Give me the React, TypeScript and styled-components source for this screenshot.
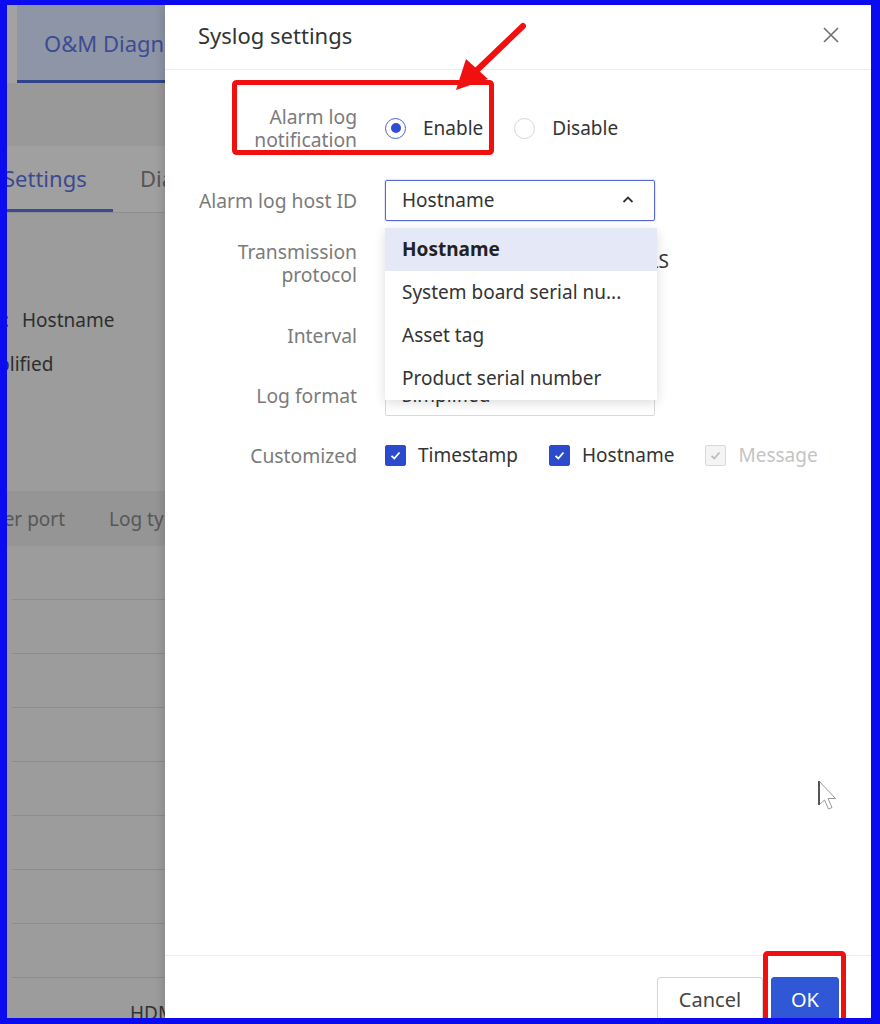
import styled, { createGlobalStyle } from "styled-components";

const GlobalStyle = createGlobalStyle`
  html, body {
    margin: 0;
    padding: 0;
    background: #fff;
  }
  body {
    font-family: "Noto Sans", "Open Sans", sans-serif;
  }
  * {
    box-sizing: border-box;
  }
`;

const Frame = styled.div`
  position: relative;
  display: flex;
  width: 880px;
  height: 1024px;
  border-style: solid;
  border-color: #0b0bf0;
  border-width: 5px 9px 6px 7px;
  overflow: hidden;
`;

/* dimmed page behind the dialog */
const BgPanel = styled.div`
  width: 158px;
  flex-shrink: 0;
  background: #9c9c9c;
  overflow: hidden;
  font-size: 19px;
  white-space: nowrap;
`;

const TopNav = styled.div`
  display: flex;
  height: 78px;
  padding-left: 10px;
  background: #a2a2a2;
`;

const NavTab = styled.div`
  flex: 1;
  display: flex;
  align-items: center;
  padding-left: 27px;
  background: #8e95a6;
  border-bottom: 3px solid #31428c;
  color: #3c4c92;
  font-size: 22px;
`;

const NavGap = styled.div`
  height: 63px;
  background: #999;
`;

const SubTabs = styled.div`
  display: flex;
  align-items: stretch;
  gap: 27px;
  height: 67px;
  background: #a0a0a0;
  border-bottom: 1px solid #8e8e8e;
`;

const SubTab = styled.div<{ $active?: boolean }>`
  display: flex;
  align-items: center;
  flex-shrink: 0;
  padding-left: ${(p) => (p.$active ? "13px" : "0")};
  margin-left: ${(p) => (p.$active ? "-17px" : "0")};
  width: ${(p) => (p.$active ? "123px" : "auto")};
  font-size: 22px;
  color: ${(p) => (p.$active ? "#3b4a8f" : "#555")};
  border-bottom: 3px solid ${(p) => (p.$active ? "#3a4a90" : "transparent")};
`;

const InfoArea = styled.div`
  height: 278px;
  padding-top: 85px;
`;

const InfoLine = styled.div<{ $shift: number }>`
  display: flex;
  align-items: center;
  height: 44px;
  margin-left: ${(p) => p.$shift}px;
  color: #2e2e2e;
`;

const InfoKey = styled.span`
  width: 32px;
  margin-right: 13px;
  text-align: right;
`;

const TableHead = styled.div`
  display: flex;
  align-items: center;
  height: 55px;
  background: #959595;
  color: #575757;
`;

const HeadCell = styled.span<{ $w?: number; $shift?: number }>`
  width: ${(p) => (p.$w ? `${p.$w}px` : "auto")};
  margin-left: ${(p) => p.$shift ?? 0}px;
  flex-shrink: 0;
`;

const TableRow = styled.div`
  height: 54px;
  margin-left: 5px;
  border-bottom: 1px solid #8c8c8c;
`;

const TableFoot = styled.div`
  padding: 22px 0 0 123px;
  color: #333;
`;

/* dialog */
const Dialog = styled.div`
  flex: 1;
  display: flex;
  flex-direction: column;
  background: #fff;
  box-shadow: -3px 0 8px rgba(0, 0, 0, 0.12);
  color: #333;
`;

const Header = styled.div`
  display: flex;
  align-items: center;
  justify-content: space-between;
  height: 65px;
  padding: 0 31px 5px 33px;
  border-bottom: 1px solid #ececec;
  flex-shrink: 0;
`;

const Title = styled.h1`
  margin: 0;
  font-size: 22px;
  font-weight: 400;
  color: #333;
`;

const CloseBtn = styled.button`
  display: flex;
  padding: 0;
  border: none;
  background: none;
`;

const Body = styled.div`
  flex: 1;
  padding-top: 22px;
`;

const Row = styled.div<{ $h: number; $track?: number; $pt?: number }>`
  display: grid;
  grid-template-columns: 192px 1fr;
  grid-template-rows: ${(p) => p.$track ?? p.$h}px;
  column-gap: 28px;
  align-items: center;
  align-content: start;
  height: ${(p) => p.$h}px;
  padding-top: ${(p) => p.$pt ?? 0}px;
`;

const Label = styled.div<{ $top?: boolean }>`
  align-self: ${(p) => (p.$top ? "start" : "center")};
  text-align: right;
  font-size: 19.3px;
  line-height: 23px;
  color: #7b7b7b;
`;

const Options = styled.div<{ $gap?: number }>`
  display: flex;
  align-items: center;
  gap: ${(p) => p.$gap ?? 31}px;
`;

const RadioItem = styled.label`
  display: flex;
  align-items: center;
  gap: 17px;
  font-size: 19px;
  color: #333;
  white-space: nowrap;
`;

const RadioDot = styled.span<{ $checked?: boolean }>`
  display: flex;
  align-items: center;
  justify-content: center;
  width: 21px;
  height: 21px;
  border-radius: 50%;
  border: 1px solid ${(p) => (p.$checked ? "#4a63d4" : "#d6d6d6")};
  &::after {
    content: "";
    width: 10px;
    height: 10px;
    border-radius: 50%;
    background: ${(p) => (p.$checked ? "#2f4fd0" : "transparent")};
  }
`;

const SelectWrap = styled.div`
  position: relative;
  width: 270px;
`;

const Field = styled.div<{ $focused?: boolean }>`
  display: flex;
  align-items: center;
  justify-content: space-between;
  width: 270px;
  height: 41px;
  padding: 0 19px 0 16px;
  border: 1px solid ${(p) => (p.$focused ? "#5568d6" : "#d9d9d9")};
  border-radius: 2px;
  box-shadow: ${(p) => (p.$focused ? "0 0 0 1px rgba(85, 104, 214, 0.15)" : "none")};
  font-size: 19px;
  color: #333;
`;

const Menu = styled.ul`
  position: absolute;
  top: 48px;
  left: 0;
  z-index: 5;
  width: 272px;
  margin: 0;
  padding: 0;
  list-style: none;
  background: #fff;
  border-radius: 3px;
  box-shadow: 0 3px 12px rgba(0, 0, 0, 0.14);
`;

const MenuItem = styled.li<{ $active?: boolean }>`
  display: flex;
  align-items: center;
  height: 43px;
  padding-left: 17px;
  font-size: 19px;
  font-weight: ${(p) => (p.$active ? 700 : 400)};
  color: ${(p) => (p.$active ? "#222" : "#333")};
  background: ${(p) => (p.$active ? "#e5e9f7" : "#fff")};
`;

const CheckItem = styled.label<{ $disabled?: boolean }>`
  display: flex;
  align-items: center;
  gap: 12px;
  font-size: 19px;
  color: ${(p) => (p.$disabled ? "#c4c4c4" : "#333")};
`;

const CheckBox = styled.span<{ $disabled?: boolean }>`
  display: flex;
  align-items: center;
  justify-content: center;
  width: 21px;
  height: 21px;
  border-radius: 2px;
  background: ${(p) => (p.$disabled ? "#f4f4f4" : "#2b4bcc")};
  border: 1px solid ${(p) => (p.$disabled ? "#d8d8d8" : "#2b4bcc")};
`;

const Footer = styled.div`
  display: flex;
  justify-content: flex-end;
  align-items: flex-start;
  gap: 8px;
  height: 63px;
  padding: 21px 32px 0;
  border-top: 1px solid #ececec;
  flex-shrink: 0;
`;

const Button = styled.button<{ $primary?: boolean }>`
  height: 48px;
  width: ${(p) => (p.$primary ? "68px" : "106px")};
  border-radius: 3px;
  border: 1px solid ${(p) => (p.$primary ? "#2f57d6" : "#d5d5d5")};
  background: ${(p) => (p.$primary ? "#2f57d6" : "#fff")};
  color: ${(p) => (p.$primary ? "#fff" : "#444")};
  font-family: inherit;
  font-size: 20px;
  padding: 0 0 4px;
`;

const Overlay = styled.svg`
  position: absolute;
  left: -7px;
  top: -5px;
  width: 880px;
  height: 1024px;
  pointer-events: none;
  z-index: 10;
`;

function Check({ color }: { color: string }) {
  return (
    <svg width="13" height="13" viewBox="0 0 13 13">
      <polyline points="2.5,6.8 5.3,9.5 10.5,3.5" fill="none" stroke={color} strokeWidth="1.8" />
    </svg>
  );
}

function Radio({ label, checked }: { label: string; checked?: boolean }) {
  return (
    <RadioItem>
      <RadioDot $checked={checked} />
      {label}
    </RadioItem>
  );
}

const hostOptions = ["Hostname", "System board serial nu...", "Asset tag", "Product serial number"];

export default function App() {
  return (
    <>
      <GlobalStyle />
      <Frame>
        <BgPanel>
          <TopNav>
            <NavTab>O&amp;M Diagnostics</NavTab>
          </TopNav>
          <NavGap />
          <SubTabs>
            <SubTab $active>Settings</SubTab>
            <SubTab>Diagnostics</SubTab>
          </SubTabs>
          <InfoArea>
            <InfoLine $shift={-30}>
              <InfoKey>ID:</InfoKey>
              Hostname
            </InfoLine>
            <InfoLine $shift={-42}>Simplified</InfoLine>
          </InfoArea>
          <TableHead>
            <HeadCell $shift={-42} $w={144}>Server port</HeadCell>
            <HeadCell>Log type</HeadCell>
          </TableHead>
          {Array.from({ length: 8 }).map((_, i) => (
            <TableRow key={i} />
          ))}
          <TableFoot>HDM</TableFoot>
        </BgPanel>

        <Dialog>
          <Header>
            <Title>Syslog settings</Title>
            <CloseBtn aria-label="Close">
              <svg width="18" height="18" viewBox="0 0 18 18">
                <path d="M2 2 L16 16 M16 2 L2 16" stroke="#6f6f6f" strokeWidth="1.6" />
              </svg>
            </CloseBtn>
          </Header>

          <Body>
            <Row $h={72}>
              <Label>
                Alarm log
                <br />
                notification
              </Label>
              <Options>
                <Radio label="Enable" checked />
                <Radio label="Disable" />
              </Options>
            </Row>

            <Row $h={72}>
              <Label>Alarm log host ID</Label>
              <SelectWrap>
                <Field $focused>
                  Hostname
                  <svg width="14" height="14" viewBox="0 0 14 14">
                    <polyline points="2.5,9 7,4.5 11.5,9" fill="none" stroke="#333" strokeWidth="1.8" />
                  </svg>
                </Field>
                <Menu>
                  {hostOptions.map((o, i) => (
                    <MenuItem key={o} $active={i === 0}>
                      {o}
                    </MenuItem>
                  ))}
                </Menu>
              </SelectWrap>
            </Row>

            <Row $h={69} $track={42} $pt={4}>
              <Label $top>
                Transmission
                <br />
                protocol
              </Label>
              <Options $gap={33}>
                <Radio label="UDP" checked />
                <Radio label="TCP" />
                <Radio label="TLS" />
              </Options>
            </Row>

            <Row $h={60}>
              <Label>Interval</Label>
              <Field>60</Field>
            </Row>

            <Row $h={60}>
              <Label>Log format</Label>
              <Field>Simplified</Field>
            </Row>

            <Row $h={60}>
              <Label>Customized</Label>
              <Options>
                <CheckItem>
                  <CheckBox>
                    <Check color="#fff" />
                  </CheckBox>
                  Timestamp
                </CheckItem>
                <CheckItem>
                  <CheckBox>
                    <Check color="#fff" />
                  </CheckBox>
                  Hostname
                </CheckItem>
                <CheckItem $disabled>
                  <CheckBox $disabled>
                    <Check color="#bdbdbd" />
                  </CheckBox>
                  Message
                </CheckItem>
              </Options>
            </Row>
          </Body>

          <Footer>
            <Button>Cancel</Button>
            <Button $primary>OK</Button>
          </Footer>
        </Dialog>

        {/* annotations drawn over the screenshot */}
        <Overlay viewBox="0 0 880 1024">
          <rect x="234.5" y="82.5" width="257" height="70" rx="2" fill="none" stroke="#f01010" strokeWidth="5" />
          <rect x="765.5" y="953.5" width="78" height="90" rx="2" fill="none" stroke="#f01010" strokeWidth="5" />
          <line x1="523" y1="26" x2="474" y2="73" stroke="#f01010" strokeWidth="6" strokeLinecap="round" />
          <polygon points="466,59 488,79 456,90" fill="#f01010" />
          <path
            d="M819 781 L819 805 L824.5 800 L828.5 809 L832 807.5 L828 798.5 L835.5 798.5 Z"
            fill="#fff"
            stroke="#9a9a9a"
            strokeWidth="1"
          />
          <line x1="819" y1="781" x2="819" y2="805" stroke="#555" strokeWidth="2" />
        </Overlay>
      </Frame>
    </>
  );
}
